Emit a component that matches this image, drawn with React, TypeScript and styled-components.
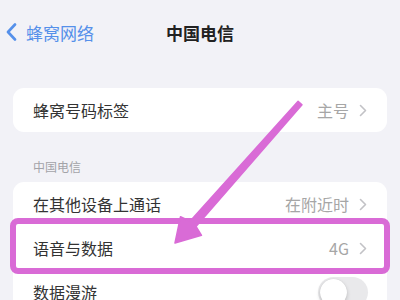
import styled, { createGlobalStyle } from 'styled-components'

const GlobalStyle = createGlobalStyle`
  html, body {
    margin: 0;
    padding: 0;
    background: #f2f2f7;
  }
  * {
    box-sizing: border-box;
  }
`

const Page = styled.div`
  position: relative;
  width: 400px;
  height: 300px;
  overflow: hidden;
  background: #f2f2f7;
  font-family: 'Noto Sans CJK SC', 'Noto Sans', sans-serif;
`

const NavBar = styled.div`
  position: relative;
  height: 64px;
  display: flex;
  align-items: center;
  justify-content: center;
`

const BackButton = styled.div`
  position: absolute;
  left: 6px;
  top: 0;
  bottom: 0;
  display: flex;
  align-items: center;
  gap: 9px;
  color: #5590ea;
  font-size: 17px;
  letter-spacing: 0;
`

const Title = styled.div`
  font-size: 17px;
  font-weight: 600;
  color: #222;
`

const Content = styled.div`
  padding: 0 13px;
  display: flex;
  flex-direction: column;
`

const Card = styled.div<{ $top: number }>`
  margin-top: ${({ $top }) => $top}px;
  background: #fff;
  border-radius: 11px;
`

const SectionHeader = styled.div`
  margin-top: 27px;
  padding-left: 20px;
  font-size: 12px;
  line-height: 16px;
  color: #a3a3a8;
`

const Row = styled.div`
  position: relative;
  height: 44px;
  display: flex;
  align-items: center;
  padding: 0 20px;
`

const Label = styled.div`
  flex: 1;
  font-size: 16px;
  color: #333;
`

const Value = styled.div`
  font-size: 16px;
  color: #a6a6a6;
  margin-right: 10px;
`

const Highlight = styled.div`
  position: absolute;
  top: -8px;
  bottom: -4px;
  left: -3px;
  right: -3px;
  border: 6px solid #d96bd6;
  border-radius: 8px;
  pointer-events: none;
`

const Toggle = styled.div`
  position: relative;
  width: 50px;
  height: 31px;
  border-radius: 16px;
  background: #e9e9eb;
  margin-right: -1px;

  &::after {
    content: '';
    position: absolute;
    left: 2px;
    top: 2px;
    width: 27px;
    height: 27px;
    border-radius: 50%;
    background: #fff;
    box-shadow: 0 2px 4px rgba(0, 0, 0, 0.18), 0 0 1px rgba(0, 0, 0, 0.12);
  }
`

const Overlay = styled.svg`
  position: absolute;
  left: 0;
  top: 0;
  pointer-events: none;
`

const Chevron = () => (
  <svg width="8" height="13" viewBox="0 0 8 13">
    <polyline points="1.5,1.5 6.5,6.5 1.5,11.5" fill="none" stroke="#c2c2c6" strokeWidth="1.6" strokeLinecap="round" strokeLinejoin="round" />
  </svg>
)

const BackChevron = () => (
  <svg width="11" height="18" viewBox="0 0 11 18">
    <polyline points="9,1.5 2,9 9,16.5" fill="none" stroke="#5590ea" strokeWidth="2.6" strokeLinecap="round" strokeLinejoin="round" />
  </svg>
)

export default function App() {
  return (
    <>
      <GlobalStyle />
      <Page>
        <NavBar>
          <BackButton>
            <BackChevron />
            <span>蜂窝网络</span>
          </BackButton>
          <Title>中国电信</Title>
        </NavBar>
        <Content>
          <Card $top={24}>
            <Row>
              <Label>蜂窝号码标签</Label>
              <Value>主号</Value>
              <Chevron />
            </Row>
          </Card>
          <SectionHeader>中国电信</SectionHeader>
          <Card $top={7}>
            <Row>
              <Label>在其他设备上通话</Label>
              <Value>在附近时</Value>
              <Chevron />
            </Row>
            <Row>
              <Highlight />
              <Label>语音与数据</Label>
              <Value>4G</Value>
              <Chevron />
            </Row>
            <Row>
              <Label>数据漫游</Label>
              <Toggle />
            </Row>
          </Card>
        </Content>
        <Overlay width="400" height="300" viewBox="0 0 400 300">
          <polygon
            points="302,104.7 196,226.5 201.5,235.3 175,243 180.5,216.7 190,221.2 298.1,101.3"
            fill="#d96bd6"
            stroke="#d96bd6"
            strokeWidth="1.5"
            strokeLinejoin="round"
          />
        </Overlay>
      </Page>
    </>
  )
}
